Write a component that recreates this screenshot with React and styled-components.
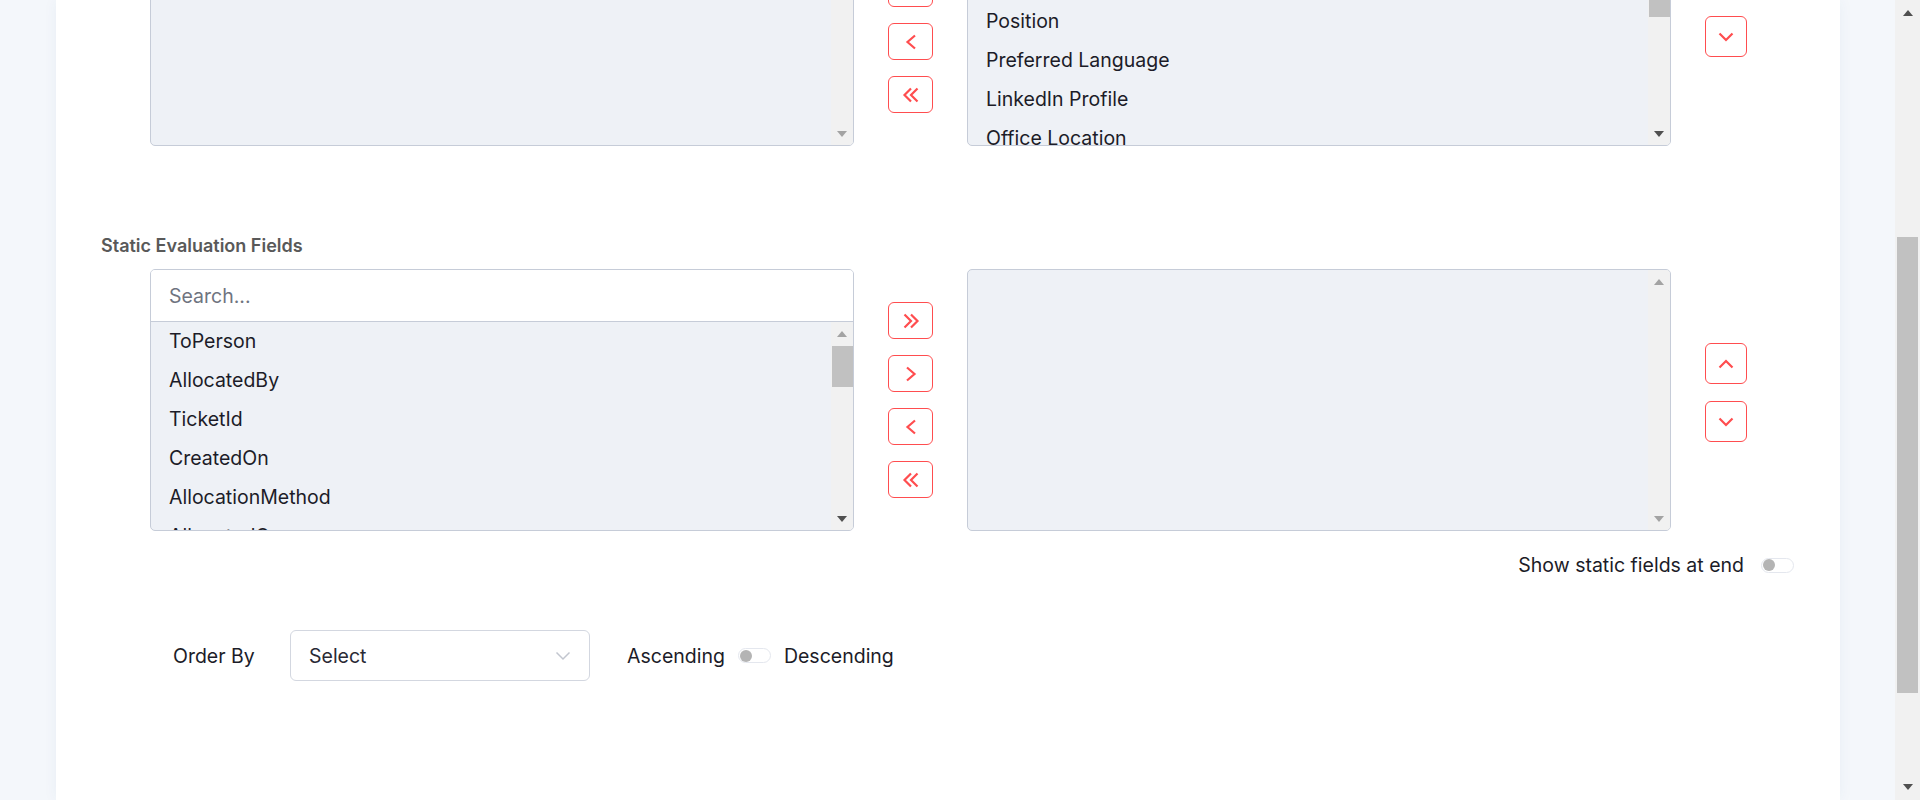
import styled, { createGlobalStyle } from 'styled-components'

const GlobalStyle = createGlobalStyle`
  html, body {
    margin: 0;
    padding: 0;
  }
  body {
    font-family: Inter, "Noto Sans", sans-serif;
    background: #f4f7fb;
    overflow: hidden;
  }
  * {
    box-sizing: border-box;
  }
`

const topRight = [
  'Employee Code',
  'Department',
  'Reporting Manager',
  'Position',
  'Preferred Language',
  'LinkedIn Profile',
  'Office Location',
  'Joining Date',
]

const staticFields = [
  'ToPerson',
  'AllocatedBy',
  'TicketId',
  'CreatedOn',
  'AllocationMethod',
  'AllocatedOn',
]

function Chevron({ dir, double }) {
  if (dir === 'up' || dir === 'down') {
    const pts = dir === 'up' ? '1.5,8.5 8,2 14.5,8.5' : '1.5,1.5 8,8 14.5,1.5'
    return (
      <svg width="16" height="10" viewBox="0 0 16 10">
        <polyline points={pts} fill="none" stroke="#ff4d4f" strokeWidth="2.2" />
      </svg>
    )
  }
  const flip = dir === 'right' ? 'scale(-1,1) translate(-18,0)' : undefined
  return (
    <svg width="18" height="16" viewBox="0 0 18 16">
      <g transform={flip}>
        {double ? (
          <>
            <polyline points="9,1.5 2.5,8 9,14.5" fill="none" stroke="#ff4d4f" strokeWidth="2.2" />
            <polyline points="15.5,1.5 9,8 15.5,14.5" fill="none" stroke="#ff4d4f" strokeWidth="2.2" />
          </>
        ) : (
          <polyline points="13,1.5 5.5,8 13,14.5" fill="none" stroke="#ff4d4f" strokeWidth="2.2" />
        )}
      </g>
    </svg>
  )
}

function ScrollBar({ size, thumbTop, thumbHeight, upOn, downOn, page }) {
  return (
    <Rail $size={size} $page={page}>
      <ArrowBox $size={size}>
        <Triangle $up $on={upOn} />
      </ArrowBox>
      <Track>
        {thumbHeight ? <Thumb $top={thumbTop} $height={thumbHeight} $page={page} /> : null}
      </Track>
      <ArrowBox $size={size}>
        <Triangle $on={downOn} />
      </ArrowBox>
    </Rail>
  )
}

function ListBox({ width, search, items, scroll }) {
  return (
    <Box $width={width}>
      {search && <Search placeholder="Search..." />}
      <ListBody>
        <Items>
          {items.map((item) => (
            <Item key={item}>{item}</Item>
          ))}
        </Items>
        <ScrollBar size={22} {...scroll} />
      </ListBody>
    </Box>
  )
}

function TransferRow({ leftItems, rightItems, leftScroll, rightScroll }) {
  return (
    <Row>
      <ListBox width={704} search items={leftItems} scroll={leftScroll} />
      <ButtonCol>
        <MoveButton><Chevron dir="right" double /></MoveButton>
        <MoveButton><Chevron dir="right" /></MoveButton>
        <MoveButton><Chevron dir="left" /></MoveButton>
        <MoveButton><Chevron dir="left" double /></MoveButton>
      </ButtonCol>
      <ListBox width={704} items={rightItems} scroll={rightScroll} />
      <OrderCol>
        <OrderButton><Chevron dir="up" /></OrderButton>
        <OrderButton><Chevron dir="down" /></OrderButton>
      </OrderCol>
    </Row>
  )
}

function App() {
  return (
    <Screen>
      <GlobalStyle />
      <Page>
        <Card>
          <Scrolled>
            <TransferRow
              leftItems={[]}
              rightItems={topRight}
              leftScroll={{ upOn: false, downOn: false }}
              rightScroll={{ upOn: false, downOn: true, thumbTop: 0, thumbHeight: 109 }}
            />
            <Section>
              <SectionTitle>Static Evaluation Fields</SectionTitle>
              <TransferRow
                leftItems={staticFields}
                rightItems={[]}
                leftScroll={{ upOn: false, downOn: true, thumbTop: 1, thumbHeight: 41 }}
                rightScroll={{ upOn: false, downOn: false }}
              />
            </Section>
            <SwitchRow>
              <Label>Show static fields at end</Label>
              <Switch />
            </SwitchRow>
            <OrderRow>
              <Label>Order By</Label>
              <Select>
                <span>Select</span>
                <svg width="16" height="10" viewBox="0 0 16 10">
                  <polyline points="1.5,1.5 8,8 14.5,1.5" fill="none" stroke="#c2c6cf" strokeWidth="1.5" />
                </svg>
              </Select>
              <SortToggle>
                <Label>Ascending</Label>
                <Switch />
                <Label>Descending</Label>
              </SortToggle>
            </OrderRow>
          </Scrolled>
        </Card>
      </Page>
      <ScrollBar size={25} page upOn downOn thumbTop={211} thumbHeight={456} />
    </Screen>
  )
}

const Screen = styled.div`
  display: flex;
  height: 800px;
  overflow: hidden;
`
const Page = styled.div`
  flex: 1;
  display: flex;
  padding: 0 55px 0 56px;
  background: #f4f7fb;
  overflow: hidden;
`
const Card = styled.div`
  flex: 1;
  background: #ffffff;
  padding: 0 46px 0 45px;
  box-shadow: 0 0 14px rgba(40, 70, 130, 0.05);
`
const Scrolled = styled.div`
  margin-top: -116px;
`
const Row = styled.div`
  display: flex;
  align-items: flex-start;
  margin-left: 49px;
  height: 262px;
`
const Box = styled.div`
  width: ${(p) => p.$width}px;
  height: 262px;
  display: flex;
  flex-direction: column;
  border: 1px solid #c6ccd8;
  border-radius: 5px;
  background: #eef1f6;
  overflow: hidden;
`
const Search = styled.input`
  height: 52px;
  flex-shrink: 0;
  border: none;
  border-bottom: 1px solid #c6ccd8;
  background: #ffffff;
  padding: 0 18px;
  font-family: Inter, sans-serif;
  font-size: 19.5px;
  color: #1c1c28;
  outline: none;
  &::placeholder {
    color: #6f7480;
  }
`
const ListBody = styled.div`
  flex: 1;
  display: flex;
  min-height: 0;
`
const Items = styled.div`
  flex: 1;
  overflow: hidden;
`
const Item = styled.div`
  height: 39px;
  line-height: 39px;
  padding: 0 18px;
  font-size: 19.5px;
  color: #1c1c28;
  white-space: nowrap;
`
const Rail = styled.div`
  width: ${(p) => p.$size}px;
  flex-shrink: 0;
  display: flex;
  flex-direction: column;
  background: #f1f1f1;
  height: ${(p) => (p.$page ? '800px' : 'auto')};
`
const ArrowBox = styled.div`
  height: ${(p) => p.$size + 1}px;
  display: flex;
  align-items: center;
  justify-content: center;
  flex-shrink: 0;
`
const Triangle = styled.div`
  width: 0;
  height: 0;
  border-left: 5.5px solid transparent;
  border-right: 5.5px solid transparent;
  ${(p) => (p.$up ? 'border-bottom' : 'border-top')}: 6px solid ${(p) => (p.$on ? '#505050' : '#a3a3a3')};
`
const Track = styled.div`
  flex: 1;
  min-height: 0;
`
const Thumb = styled.div`
  margin-top: ${(p) => p.$top}px;
  margin-left: ${(p) => (p.$page ? 2 : 1)}px;
  margin-right: ${(p) => (p.$page ? 2 : 0)}px;
  height: ${(p) => p.$height}px;
  background: #c1c1c1;
`
const ButtonCol = styled.div`
  width: 45px;
  height: 262px;
  margin: 0 34px;
  display: flex;
  flex-direction: column;
  justify-content: center;
  gap: 16px;
`
const MoveButton = styled.button`
  width: 45px;
  height: 37px;
  padding: 0;
  display: flex;
  align-items: center;
  justify-content: center;
  background: #ffffff;
  border: 1px solid #ff4d4f;
  border-radius: 6px;
  cursor: pointer;
`
const OrderCol = styled.div`
  margin-left: 34px;
  padding-top: 74px;
  display: flex;
  flex-direction: column;
  gap: 17px;
`
const OrderButton = styled(MoveButton)`
  width: 42px;
  height: 41px;
`
const Section = styled.div`
  margin-top: 88px;
`
const SectionTitle = styled.div`
  font-size: 18px;
  line-height: 24px;
  font-weight: 600;
  color: #595959;
  margin-bottom: 11px;
`
const Label = styled.span`
  font-size: 19.5px;
  line-height: 24px;
  color: #1c1c28;
  white-space: nowrap;
`
const SwitchRow = styled.div`
  display: flex;
  justify-content: flex-end;
  align-items: center;
  gap: 17px;
  margin-top: 22px;
`
const Switch = styled.span`
  width: 33px;
  height: 15px;
  border: 1px solid #e4e7ee;
  border-radius: 8px;
  background: #ffffff;
  display: inline-flex;
  align-items: center;
  padding: 0 1px;
  &::before {
    content: '';
    width: 12px;
    height: 12px;
    border-radius: 50%;
    background: #b4b4b4;
  }
`
const OrderRow = styled.div`
  display: grid;
  grid-template-columns: 117px 300px auto;
  align-items: center;
  margin: 53px 0 0 72px;
`
const Select = styled.div`
  height: 51px;
  display: flex;
  align-items: center;
  justify-content: space-between;
  padding: 0 18px;
  border: 1px solid #d3d7e0;
  border-radius: 6px;
  background: #ffffff;
  font-size: 19.5px;
  color: #2a2a35;
`
const SortToggle = styled.div`
  display: flex;
  align-items: center;
  margin-left: 37px;
  gap: 13px;
`

export default App
